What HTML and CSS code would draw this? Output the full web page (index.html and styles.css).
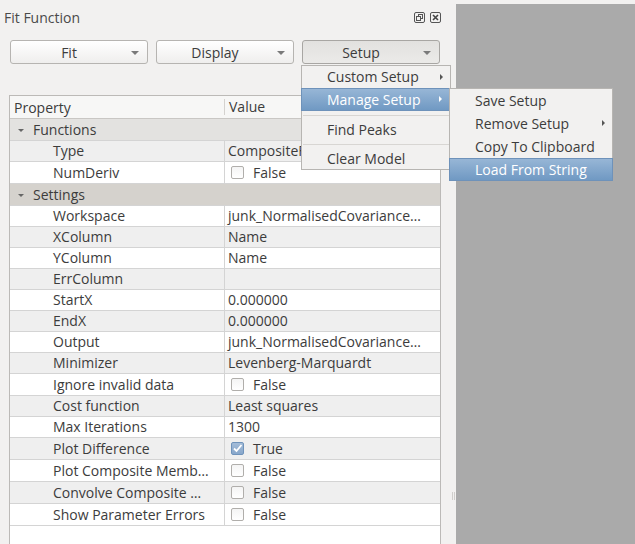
FILE: index.html
```html
<!DOCTYPE html>
<html>
<head>
<meta charset="utf-8">
<link rel="stylesheet" href="styles.css">
</head>
<body>
<div class="dock">
  <div class="titlebar">
    <span class="title">Fit Function</span>
    <div class="title-icons">
      <svg class="ticon" width="11" height="11" viewBox="0 0 11 11"><rect x="0.5" y="0.5" width="10" height="10" rx="1.5" fill="none" stroke="#555"/><rect x="4.5" y="2.5" width="4" height="4" fill="none" stroke="#555"/><rect x="2.5" y="4.5" width="4" height="4" fill="#f2f1f0" stroke="#555"/></svg>
      <svg class="ticon" width="11" height="11" viewBox="0 0 11 11"><rect x="0.5" y="0.5" width="10" height="10" rx="1.5" fill="none" stroke="#555"/><path d="M3 3 L8 8 M8 3 L3 8" stroke="#444" stroke-width="1.6"/></svg>
    </div>
  </div>
  <div class="toolbar">
    <div class="btn"><span class="btn-label">Fit</span><span class="caret"></span></div>
    <div class="btn"><span class="btn-label">Display</span><span class="caret"></span></div>
    <div class="btn pressed"><span class="btn-label">Setup</span><span class="caret"></span></div>
  </div>
  <div class="table">
    <div class="hrow">
      <div class="hcell">Property</div>
      <div class="hcell hval">Value</div>
    </div>
    <div class="grow g1"><span class="arrow"></span>Functions</div>
    <div class="row alt"><div class="pc">Type</div><div class="vc">CompositeFunction</div></div>
    <div class="row cb"><div class="pc">NumDeriv</div><div class="vc"><span class="check"></span>False</div></div>
    <div class="grow g2"><span class="arrow"></span>Settings</div>
    <div class="row"><div class="pc">Workspace</div><div class="vc">junk_NormalisedCovariance…</div></div>
    <div class="row alt"><div class="pc">XColumn</div><div class="vc">Name</div></div>
    <div class="row"><div class="pc">YColumn</div><div class="vc">Name</div></div>
    <div class="row alt"><div class="pc">ErrColumn</div><div class="vc"></div></div>
    <div class="row"><div class="pc">StartX</div><div class="vc">0.000000</div></div>
    <div class="row alt"><div class="pc">EndX</div><div class="vc">0.000000</div></div>
    <div class="row"><div class="pc">Output</div><div class="vc">junk_NormalisedCovariance…</div></div>
    <div class="row alt"><div class="pc">Minimizer</div><div class="vc">Levenberg-Marquardt</div></div>
    <div class="row cb"><div class="pc">Ignore invalid data</div><div class="vc"><span class="check"></span>False</div></div>
    <div class="row alt"><div class="pc">Cost function</div><div class="vc">Least squares</div></div>
    <div class="row"><div class="pc">Max Iterations</div><div class="vc">1300</div></div>
    <div class="row alt cb"><div class="pc">Plot Difference</div><div class="vc"><span class="check on"><svg width="11" height="11" viewBox="0 0 11 11"><path d="M2 5.5 L4.5 8 L9.5 2" fill="none" stroke="#fff" stroke-width="1.8"/></svg></span>True</div></div>
    <div class="row cb"><div class="pc">Plot Composite Memb…</div><div class="vc"><span class="check"></span>False</div></div>
    <div class="row alt cb"><div class="pc">Convolve Composite …</div><div class="vc"><span class="check"></span>False</div></div>
    <div class="row cb"><div class="pc">Show Parameter Errors</div><div class="vc"><span class="check"></span>False</div></div>
  </div>
</div>
<div class="splitter"><span class="grip"></span></div>
<div class="canvas"></div>

<div class="menu menu-main">
  <div class="mitem">Custom Setup<span class="sub"></span></div>
  <div class="mitem active">Manage Setup<span class="sub"></span></div>
  <div class="msep"></div>
  <div class="mitem">Find Peaks</div>
  <div class="msep short"></div>
  <div class="mitem">Clear Model</div>
</div>
<div class="menu menu-sub">
  <div class="mitem">Save Setup</div>
  <div class="mitem">Remove Setup<span class="sub"></span></div>
  <div class="mitem">Copy To Clipboard</div>
  <div class="mitem active">Load From String</div>
</div>
</body>
</html>
```
FILE: styles.css
```css
html, body {
  margin: 0;
  padding: 0;
}
body {
  width: 635px;
  height: 544px;
  overflow: hidden;
  display: flex;
  background: #f2f1f0;
  font-family: "Open Sans", "DejaVu Sans", sans-serif;
  font-size: 14px;
  color: #3c3c3c;
  position: relative;
}
.dock {
  width: 451px;
  display: flex;
  flex-direction: column;
  flex: none;
}
.titlebar {
  height: 34px;
  flex: none;
  display: flex;
  align-items: center;
  padding: 0 6px 0 4px;
}
.title {
  color: #4a4a4a;
  flex: 1;
}
.title-icons {
  display: flex;
  gap: 5px;
  margin-right: 4px;
}
.ticon {
  display: block;
}
.toolbar {
  flex: none;
  display: flex;
  gap: 8px;
  padding: 6px 11px 0 10px;
}
.btn {
  flex: 1;
  height: 24px;
  box-sizing: border-box;
  border: 1px solid #b6b4b1;
  border-radius: 3px;
  background: linear-gradient(#ffffff, #efeeed);
  display: flex;
  align-items: center;
  position: relative;
}
.btn.pressed {
  background: linear-gradient(#e2e1df, #ebeae8);
  border-color: #a8a6a3;
}
.btn-label {
  flex: 1;
  text-align: center;
  padding-right: 20px;
}
.caret {
  position: absolute;
  right: 8px;
  top: 10px;
  width: 0;
  height: 0;
  border-left: 4px solid transparent;
  border-right: 4px solid transparent;
  border-top: 4px solid #7a7a7a;
}
.table {
  margin: 31px 10px 0 9px;
  height: 470px;
  flex: none;
  border: 1px solid #bcbab7;
  background: #ffffff;
}
.hrow {
  display: grid;
  grid-template-columns: 214px 1fr;
  height: 22px;
  border-bottom: 1px solid #c9c7c4;
  background: #f7f7f6;
  align-items: center;
}
.hcell {
  padding-left: 4px;
}
.hval {
  border-left: 1px solid #d4d2cf;
  height: 16px;
  line-height: 16px;
  padding-left: 4px;
}
.grow {
  height: 21px;
  line-height: 21px;
  border-bottom: 1px solid #d4d4d4;
  padding-left: 8px;
  display: flex;
  align-items: center;
}
.g1 { background: #e3e2e0; }
.g2 { background: #d5d2cd; }
.arrow {
  width: 0;
  height: 0;
  border-left: 3px solid transparent;
  border-right: 3px solid transparent;
  border-top: 3px solid #666;
  margin: 1px 9px 0 0;
}
.row {
  display: grid;
  grid-template-columns: 214px 1fr;
  height: 20px;
  line-height: 20px;
  border-bottom: 1px solid #d4d4d4;
  background: #ffffff;
}
.row.cb {
  height: 21px;
  line-height: 21px;
}
.row.alt {
  background: #efefef;
}
.pc {
  padding-left: 43px;
  white-space: nowrap;
  overflow: hidden;
}
.vc {
  border-left: 1px solid #d4d4d4;
  padding-left: 3px;
  white-space: nowrap;
  overflow: hidden;
  display: flex;
  align-items: center;
}
.check {
  width: 13px;
  height: 13px;
  box-sizing: border-box;
  border: 1px solid #b0aeab;
  border-radius: 2px;
  background: linear-gradient(#f4f4f4, #ffffff);
  margin: 0 9px 0 3px;
  display: flex;
  align-items: center;
  justify-content: center;
}
.check.on {
  border-color: #6f93bb;
  background: linear-gradient(#a3bcd8, #88a7cb);
}
.check svg { display: block; }
.splitter {
  width: 5px;
  flex: none;
  position: relative;
}
.grip {
  position: absolute;
  left: 1px;
  top: 492px;
  width: 3px;
  height: 8px;
  border-left: 1px solid #d0cecb;
  border-right: 1px solid #d0cecb;
  box-sizing: border-box;
}
.canvas {
  flex: 1;
  margin-top: 4px;
  background: #aaaaaa;
}
.menu {
  position: absolute;
  background: #f2f1f0;
  border: 1px solid #b7b5b2;
  box-sizing: border-box;
}
.menu-main {
  left: 301px;
  top: 65px;
  width: 150px;
  height: 105px;
}
.menu-sub {
  left: 449px;
  top: 88px;
  width: 164px;
  height: 93px;
}
.mitem {
  height: 22px;
  line-height: 22px;
  padding-left: 25px;
  position: relative;
  white-space: nowrap;
}
.menu-sub .mitem {
  height: 23px;
  line-height: 23px;
}
.mitem.active {
  margin: 0 -1px;
  padding-left: 25px;
  height: 23px;
  box-sizing: border-box;
  border: 1px solid #6e92ba;
  background: linear-gradient(#97b6d6, #7099c3);
  color: #ffffff;
  line-height: 21px;
}
.menu-sub .mitem.active {
  height: 23px;
  line-height: 21px;
}
.sub {
  position: absolute;
  right: 7px;
  top: 8px;
  width: 0;
  height: 0;
  border-top: 3px solid transparent;
  border-bottom: 3px solid transparent;
  border-left: 3px solid #555;
}
.mitem.active .sub {
  border-left-color: #ffffff;
  right: 8px;
  top: 7px;
}
.msep {
  height: 8px;
  position: relative;
}
.msep::after {
  content: "";
  position: absolute;
  left: 1px;
  right: 1px;
  top: 4px;
  border-top: 1px solid #d8d6d3;
}
.msep.short { height: 7px; }
.msep.short::after { top: 3px; }
```
